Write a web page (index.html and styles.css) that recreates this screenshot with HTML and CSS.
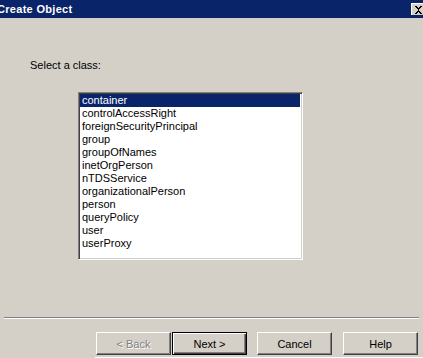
FILE: index.html
```html
<!DOCTYPE html>
<html>
<head>
<meta charset="utf-8">
<link rel="stylesheet" href="styles.css">
</head>
<body>
<div class="dialog">
  <div class="titlebar">
    <span class="title">Create Object</span>
    <span class="close"><svg width="9" height="8" viewBox="0 0 9 8"><path d="M1 0h2v1h1v1h1V1h1V0h2v1H7v1H6v1H5v2h1v1h1v1h1v1H6V7H5V6H4v1H3v1H1V7h1V6h1V5h1V3H3V2H2V1H1z" fill="#000"/></svg></span>
  </div>
  <div class="content">
    <div class="label">Select a class:</div>
    <div class="listbox">
      <div class="item selected">container</div>
      <div class="item">controlAccessRight</div>
      <div class="item">foreignSecurityPrincipal</div>
      <div class="item">group</div>
      <div class="item">groupOfNames</div>
      <div class="item">inetOrgPerson</div>
      <div class="item">nTDSService</div>
      <div class="item">organizationalPerson</div>
      <div class="item">person</div>
      <div class="item">queryPolicy</div>
      <div class="item">user</div>
      <div class="item">userProxy</div>
    </div>
  </div>
  <div class="separator"></div>
  <div class="buttons">
    <div class="btn disabled"><span>&lt; Back</span></div>
    <div class="btn default"><span>Next &gt;</span></div>
    <div class="btn cancel"><span>Cancel</span></div>
    <div class="btn"><span>Help</span></div>
  </div>
  <div class="bottomline"></div>
</div>
</body>
</html>
```
FILE: styles.css
```css
html, body {
  margin: 0;
  padding: 0;
  background: #d4d0c8;
  overflow: hidden;
}
.dialog {
  width: 423px;
  height: 358px;
  background: #d4d0c8;
  font-family: "Liberation Sans", Arial, sans-serif;
  font-size: 11px;
  color: #000;
  overflow: hidden;
}
.titlebar {
  height: 18px;
  background: #0a246a;
  display: flex;
  align-items: center;
  justify-content: space-between;
}
.title {
  color: #fff;
  font-weight: bold;
  font-size: 11px;
  letter-spacing: 0.3px;
  margin-left: -3px;
  line-height: 18px;
}
.close {
  width: 14px;
  height: 12px;
  margin-right: -2px;
  background: #d4d0c8;
  box-sizing: border-box;
  border-top: 1px solid #fff;
  border-left: 1px solid #fff;
  display: flex;
  align-items: center;
  justify-content: center;
}
.content {
  padding: 41px 0 0 30px;
}
.label {
  line-height: 13px;
  height: 13px;
}
.listbox {
  margin: 20px 0 0 48px;
  width: 225px;
  height: 168px;
  box-sizing: border-box;
  background: #fff;
  border-top: 1px solid #808080;
  border-left: 1px solid #808080;
  border-right: 1px solid #fff;
  border-bottom: 1px solid #fff;
  box-shadow: inset 1px 1px 0 #404040, inset -1px -1px 0 #d4d0c8;
  padding: 1px 2px 0 1px;
}
.item {
  height: 13px;
  line-height: 13px;
  padding-left: 2px;
  white-space: nowrap;
}
.item.selected {
  background: #0a246a;
  color: #fff;
}
.separator {
  margin: 57px 4px 0 4px;
  height: 1px;
  background: #808080;
  border-bottom: 1px solid #fff;
}
.buttons {
  display: flex;
  justify-content: flex-end;
  padding: 13px 5px 0 0;
}
.btn {
  width: 75px;
  height: 23px;
  box-sizing: border-box;
  background: #d4d0c8;
  border-top: 1px solid #fff;
  border-left: 1px solid #fff;
  border-right: 1px solid #404040;
  border-bottom: 1px solid #404040;
  box-shadow: inset -1px -1px 0 #808080;
  display: flex;
  align-items: center;
  justify-content: center;
  margin-left: 11px;
}
.btn.disabled {
  margin-left: 0;
  color: #808080;
  text-shadow: 1px 1px 0 #fff;
}
.btn.default {
  margin-left: 1px;
  border: 1px solid #000;
  box-shadow: inset 1px 1px 0 #fff, inset -1px -1px 0 #404040, inset -2px -2px 0 #808080;
}
.btn.cancel {
  margin-left: 10px;
}
.bottomline {
  margin: 2px 0 0 95px;
  height: 1px;
  background: #fff;
}
```
